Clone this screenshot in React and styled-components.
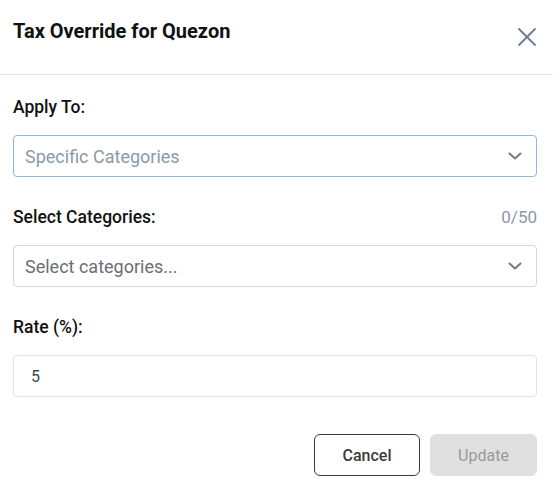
import React from 'react'
import styled, { createGlobalStyle } from 'styled-components'

const GlobalStyle = createGlobalStyle`
  html, body {
    margin: 0;
    padding: 0;
    background: #fff;
    font-family: Roboto, "Liberation Sans", sans-serif;
  }
`

// styles
const Dialog = styled.div`
  width: 553px;
  height: 490px;
  background: #fff;
  box-sizing: border-box;
`

const Header = styled.div`
  display: flex;
  align-items: center;
  justify-content: space-between;
  height: 75px;
  padding: 0 16px 0 13px;
  border-bottom: 1px solid #e2e2e2;
  box-sizing: border-box;
`

const Title = styled.h2`
  margin: 0 0 13px;
  font-size: 20px;
  font-weight: 700;
  color: #111;
`

const CloseButton = styled.button`
  display: flex;
  padding: 0;
  border: 0;
  background: none;
`

const Body = styled.div`
  display: flex;
  flex-direction: column;
  padding: 20px 16px 0 13px;
`

const Field = styled.div`
  display: flex;
  flex-direction: column;
  margin-bottom: 28px;
`

const LabelRow = styled.div`
  display: flex;
  justify-content: space-between;
  align-items: center;
  height: 24px;
  margin-bottom: 16px;
`

const Label = styled.label`
  font-size: 17.5px;
  font-weight: 500;
  color: #111;
`

const Counter = styled.span`
  font-size: 17px;
  color: #8a98a6;
`

const Select = styled.div`
  display: flex;
  align-items: center;
  justify-content: space-between;
  height: 42px;
  padding: 0 14px 0 11px;
  border: 1px solid ${({ focused }) => (focused ? '#8ab4f0' : '#d6d6d6')};
  border-radius: 4px;
  box-sizing: border-box;
  font-size: 18px;
  color: ${({ focused }) => (focused ? '#8a9aa8' : '#6a6f74')};
`

const Input = styled.div`
  display: flex;
  align-items: center;
  height: 42px;
  padding: 0 17px;
  border: 1px solid #e2e2e2;
  border-radius: 4px;
  box-sizing: border-box;
  font-size: 16px;
  color: #3a4656;
`

const Footer = styled.div`
  display: flex;
  justify-content: flex-end;
  gap: 10px;
  padding: 9px 16px 0 13px;
`

const Button = styled.button`
  height: 42px;
  width: ${({ primary }) => (primary ? '107px' : '106px')};
  border-radius: 6px;
  font-family: inherit;
  font-size: 16px;
  font-weight: ${({ primary }) => (primary ? 400 : 500)};
  border: 1px solid ${({ primary }) => (primary ? '#e0e0e0' : '#3a3a3a')};
  background: ${({ primary }) => (primary ? '#e0e0e0' : '#fff')};
  color: ${({ primary }) => (primary ? '#9a9a9a' : '#3a3a3a')};
`

const Chevron = () => (
  <svg width="14" height="8" viewBox="0 0 14 8" fill="none">
    <path d="M1.5 1.5 L7 6.5 L12.5 1.5" stroke="#6b7b8b" strokeWidth="2" strokeLinecap="round" strokeLinejoin="round" />
  </svg>
)

const App = () => (
  <Dialog>
    <GlobalStyle />
    <Header>
      <Title>Tax Override for Quezon</Title>
      <CloseButton>
        <svg width="20" height="20" viewBox="0 0 20 20" fill="none">
          <path d="M2 2 L18 18 M18 2 L2 18" stroke="#6b7b8b" strokeWidth="1.8" strokeLinecap="round" />
        </svg>
      </CloseButton>
    </Header>
    <Body>
      <Field>
        <LabelRow>
          <Label>Apply To:</Label>
        </LabelRow>
        <Select focused>
          Specific Categories
          <Chevron />
        </Select>
      </Field>
      <Field>
        <LabelRow>
          <Label>Select Categories:</Label>
          <Counter>0/50</Counter>
        </LabelRow>
        <Select>
          Select categories...
          <Chevron />
        </Select>
      </Field>
      <Field>
        <LabelRow>
          <Label>Rate (%):</Label>
        </LabelRow>
        <Input>5</Input>
      </Field>
    </Body>
    <Footer>
      <Button>Cancel</Button>
      <Button primary>Update</Button>
    </Footer>
  </Dialog>
)

export default App
